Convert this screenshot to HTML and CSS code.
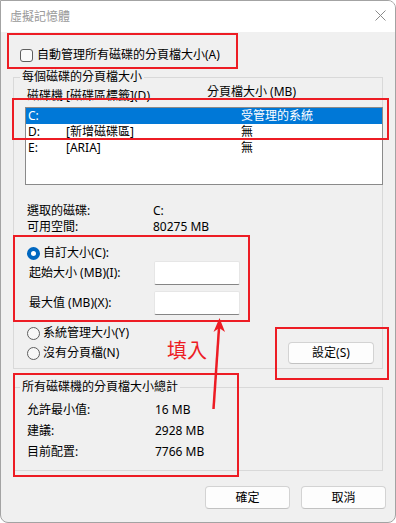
FILE: index.html
```html
<!DOCTYPE html>
<html lang="zh-Hant">
<head>
<meta charset="utf-8">
<title>虛擬記憶體</title>
<link rel="stylesheet" href="styles.css">
</head>
<body>
<div class="stage">
  <div class="window">
    <div class="titlebar">
      <span class="title">虛擬記憶體</span>
      <svg class="close" width="11" height="11" viewBox="0 0 11 11"><path d="M0.5 0.5L10.5 10.5M10.5 0.5L0.5 10.5" stroke="#8a8a8a" stroke-width="1" fill="none"/></svg>
    </div>
    <div class="body">
      <div class="check-row"><span class="checkbox"></span><span>自動管理所有磁碟的分頁檔大小(A)</span></div>

      <div class="group group-drives">
        <div class="legend">每個磁碟的分頁檔大小</div>
        <div class="colheads">
          <span class="colhead-drive">磁碟機 [磁碟區標籤](D)</span>
          <span class="colhead-size">分頁檔大小 (MB)</span>
        </div>
        <div class="listbox">
          <div class="lrow selected"><span class="c1">C:</span><span class="c2"></span><span class="c3">受管理的系統</span></div>
          <div class="lrow"><span class="c1">D:</span><span class="c2">[新增磁碟區]</span><span class="c3">無</span></div>
          <div class="lrow"><span class="c1">E:</span><span class="c2">[ARIA]</span><span class="c3">無</span></div>
        </div>
        <div class="info info-first"><span class="info-label">選取的磁碟:</span><span>C:</span></div>
        <div class="info"><span class="info-label">可用空間:</span><span>80275 MB</span></div>
        <div class="radio-row custom"><span class="radio on"></span><span>自訂大小(C):</span></div>
        <div class="field-row"><span class="field-label">起始大小 (MB)(I):</span><span class="input"></span></div>
        <div class="field-row second"><span class="field-label">最大值 (MB)(X):</span><span class="input"></span></div>
        <div class="radio-row sys"><span class="radio"></span><span>系統管理大小(Y)</span></div>
        <div class="none-row">
          <div class="radio-item"><span class="radio"></span><span>沒有分頁檔(N)</span></div>
          <button class="btn btn-set">設定(S)</button>
        </div>
      </div>

      <div class="group group-total">
        <div class="legend">所有磁碟機的分頁檔大小總計</div>
        <div class="total-row first"><span class="total-label">允許最小值:</span><span>16 MB</span></div>
        <div class="total-row"><span class="total-label">建議:</span><span>2928 MB</span></div>
        <div class="total-row"><span class="total-label">目前配置:</span><span>7766 MB</span></div>
      </div>

      <div class="footer">
        <button class="btn btn-foot">確定</button>
        <button class="btn btn-foot">取消</button>
      </div>
    </div>
  </div>

  <div class="mark mark-auto"></div>
  <div class="mark mark-list"></div>
  <div class="mark mark-custom"></div>
  <div class="mark mark-set"></div>
  <div class="mark mark-total"></div>
  <div class="note">填入</div>
  <svg class="arrow" width="396" height="523" viewBox="0 0 396 523">
    <line x1="213.5" y1="409" x2="219" y2="328" stroke="#ed1c24" stroke-width="2.5"/>
    <polygon points="219.5,318 225,332 219.2,328 213.5,332" fill="#ed1c24"/>
  </svg>
</div>
</body>
</html>
```

FILE: styles.css
```css
html, body {
  margin: 0;
  padding: 0;
  background: #ffffff;
}

body {
  font-family: "Noto Sans", "Noto Sans CJK TC", sans-serif;
  font-size: 12px;
  line-height: 16px;
  color: #000;
}

.stage {
  position: relative;
  width: 396px;
  height: 523px;
}

.window {
  width: 396px;
  height: 523px;
  box-sizing: border-box;
  border: 1px solid #a3a3a3;
  border-radius: 0 8px 8px 8px;
  background: #f0f0f0;
  overflow: hidden;
  display: flex;
  flex-direction: column;
}

.titlebar {
  flex: none;
  height: 31px;
  background: #ffffff;
  display: flex;
  justify-content: space-between;
  align-items: center;
  padding: 0 9px 0 9px;
}

.title {
  color: #9a9a9a;
  line-height: 16px;
}

.close {
  align-self: flex-start;
  margin-top: 9px;
}

.body {
  flex: 1;
}

.check-row {
  display: flex;
  align-items: center;
  gap: 4px;
  height: 16px;
  margin: 15px 0 0 19px;
}

.checkbox {
  width: 13px;
  height: 13px;
  box-sizing: border-box;
  border: 1px solid #5f5f5f;
  border-radius: 3px;
  background: #fbfbfb;
}

.group {
  margin-left: 12px;
  width: 370px;
  box-sizing: border-box;
  border: 1px solid #d9d9d9;
}

.group-drives {
  margin-top: 14px;
  padding-bottom: 4px;
}

.legend {
  display: table;
  margin: -9px 0 0 6px;
  padding: 0 2px;
  line-height: 16px;
  background: #f0f0f0;
}

.colheads {
  display: flex;
  height: 23px;
  margin-top: -1px;
  padding-left: 13px;
}

.colhead-drive {
  width: 180px;
  margin-top: 4px;
  height: 16px;
}

.colhead-size {
  height: 16px;
}

.listbox {
  margin-left: 11px;
  width: 358px;
  height: 78px;
  box-sizing: border-box;
  border: 1px solid #8a8a8a;
  background: #ffffff;
}

.lrow {
  display: flex;
  height: 16px;
  line-height: 16px;
  padding-left: 2px;
}

.lrow.selected {
  background: #0078d7;
  color: #ffffff;
}

.c1 { width: 38px; }
.c2 { width: 175px; }

.info {
  display: flex;
  padding-left: 13px;
  height: 16px;
}

.info-first {
  margin-top: 18px;
}

.info-label {
  width: 126px;
}

.radio-row,
.radio-item {
  display: flex;
  align-items: center;
  gap: 3px;
  height: 16px;
}

.radio-row {
  padding-left: 13px;
}

.radio-row.custom { margin-top: 10px; }
.radio-row.sys { margin-top: 10px; }

.radio {
  width: 13px;
  height: 13px;
  box-sizing: border-box;
  border: 1px solid #5f5f5f;
  border-radius: 50%;
  background: #f7f7f7;
}

.radio.on {
  border: 4px solid #0067c0;
  background: #ffffff;
}

.field-row {
  display: flex;
  align-items: center;
  height: 24px;
  padding-left: 15px;
}

.field-row.second {
  margin-top: 6px;
}

.field-label {
  width: 125px;
}

.input {
  width: 86px;
  height: 24px;
  box-sizing: border-box;
  background: #ffffff;
  border: 1px solid #e6e6e6;
  border-bottom: 1px solid #858585;
  border-radius: 2px;
}

.none-row {
  display: flex;
  justify-content: space-between;
  align-items: center;
  height: 22px;
  margin-top: 1px;
  padding: 0 8px 0 13px;
}

.btn {
  font: inherit;
  line-height: 16px;
  color: #000;
  padding: 0;
  margin: 0;
  box-sizing: border-box;
  background: #fdfdfd;
  border: 1px solid #d3d3d3;
  border-bottom-color: #c2c2c2;
  border-radius: 4px;
}

.btn-set {
  width: 86px;
  height: 22px;
}

.group-total {
  margin-top: 18px;
  padding-bottom: 10px;
}

.total-row {
  display: flex;
  padding-left: 13px;
  height: 16px;
  margin-top: 5px;
}

.total-row.first {
  margin-top: 7px;
}

.total-label {
  width: 128px;
}

.footer {
  display: flex;
  justify-content: flex-end;
  gap: 11px;
  margin-top: 15px;
  padding-right: 9px;
}

.btn-foot {
  width: 85px;
  height: 23px;
}

/* annotations drawn over the screenshot */
.mark {
  position: absolute;
  box-sizing: border-box;
  border: 2px solid #ed1c24;
}

.mark-auto { left: 7px; top: 33px; width: 231px; height: 36px; }
.mark-list { left: 12px; top: 98px; width: 377px; height: 42px; }
.mark-custom { left: 13px; top: 235px; width: 237px; height: 87px; }
.mark-set { left: 275px; top: 327px; width: 114px; height: 53px; }
.mark-total { left: 13px; top: 373px; width: 226px; height: 104px; }

.note {
  position: absolute;
  left: 167px;
  top: 339px;
  font-size: 20px;
  line-height: 24px;
  color: #ed1c24;
}

.arrow {
  position: absolute;
  left: 0;
  top: 0;
  pointer-events: none;
}
```
